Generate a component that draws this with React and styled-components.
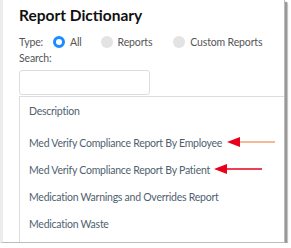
import React from "react";
import styled, { createGlobalStyle } from "styled-components";

const Global = createGlobalStyle`
  html, body { margin: 0; padding: 0; background: #fff; }
  body { font-family: "Lato", "Noto Sans", sans-serif; }
`;

const Frame = styled.div`
  position: relative;
  width: 285px;
  height: 243px;
  box-sizing: border-box;
  border-left: 3px solid #ececec;
  border-right: 1px solid #bbb;
  border-bottom: 1px solid #bbb;
  box-shadow: 2px 2px 1px #999, 3px 3px 1px #ccc;
  background: #fff;
  overflow: hidden;
  padding: 5px 0 0 16px;
  white-space: nowrap;
`;

const Title = styled.h1`
  margin: 0;
  font-family: "Lato", sans-serif;
  font-weight: 700;
  font-size: 15.5px;
  line-height: 20px;
  color: #111;
`;

const TypeRow = styled.div`
  display: flex;
  align-items: center;
  margin-top: 9px;
  height: 16px;
`;

const Label = styled.span`
  font-size: 10.5px;
  letter-spacing: -0.15px;
  color: #555;
  margin-right: ${(p) => p.$mr || 0}px;
`;

const Radio = styled.span`
  width: 12px;
  height: 12px;
  border-radius: 50%;
  box-sizing: border-box;
  background: ${(p) => (p.$checked ? "#fff" : "#e3e3e3")};
  border: ${(p) => (p.$checked ? "3.5px solid #1a8cff" : "none")};
  margin-right: 5px;
`;

const SearchLabel = styled.div`
  margin-top: 0;
  font-size: 10.5px;
  letter-spacing: -0.15px;
  color: #555;
  line-height: 16px;
`;

const Input = styled.div`
  margin-top: 4px;
  width: 131px;
  height: 25px;
  box-sizing: border-box;
  border: 1px solid #ddd;
  border-radius: 3px;
`;

const Table = styled.div`
  margin-top: 1px;
  border-left: 1px solid #ddd;
  border-top: 1px solid #ddd;
  height: 200px;
`;

const Row = styled.div`
  position: relative;
  height: 27px;
  display: flex;
  align-items: center;
  padding-left: 9px;
  font-size: 10.5px;
  letter-spacing: -0.25px;
  color: #4f5f70;
  margin-top: ${(p) => p.$mt || 0}px;
`;

const Arrow = styled.svg`
  position: absolute;
  top: 7px;
  left: ${(p) => p.$left}px;
`;

function RedArrow({ left, length, line }) {
  return (
    <Arrow $left={left} width={length} height={12} viewBox={`0 0 ${length} 12`}>
      <line x1="8" y1="6" x2={length} y2="6" stroke={line} strokeWidth="1.5" />
      <polygon points="0,6 13,1 13,11" fill="#e8001c" />
    </Arrow>
  );
}

export default function App() {
  return (
    <>
      <Global />
      <Frame>
        <Title>Report Dictionary</Title>
        <TypeRow>
          <Label $mr={10}>Type:</Label>
          <Radio $checked />
          <Label $mr={19}>All</Label>
          <Radio />
          <Label $mr={21}>Reports</Label>
          <Radio />
          <Label>Custom Reports</Label>
        </TypeRow>
        <SearchLabel>Search:</SearchLabel>
        <Input />
        <Table>
          <Row>Description</Row>
          <Row $mt={5}>
            Med Verify Compliance Report By Employee
            <RedArrow left={207} length={48} line="#f4a070" />
          </Row>
          <Row>
            Med Verify Compliance Report By Patient
            <RedArrow left={194} length={48} line="#e8001c" />
          </Row>
          <Row>Medication Warnings and Overrides Report</Row>
          <Row>Medication Waste</Row>
        </Table>
      </Frame>
    </>
  );
}
